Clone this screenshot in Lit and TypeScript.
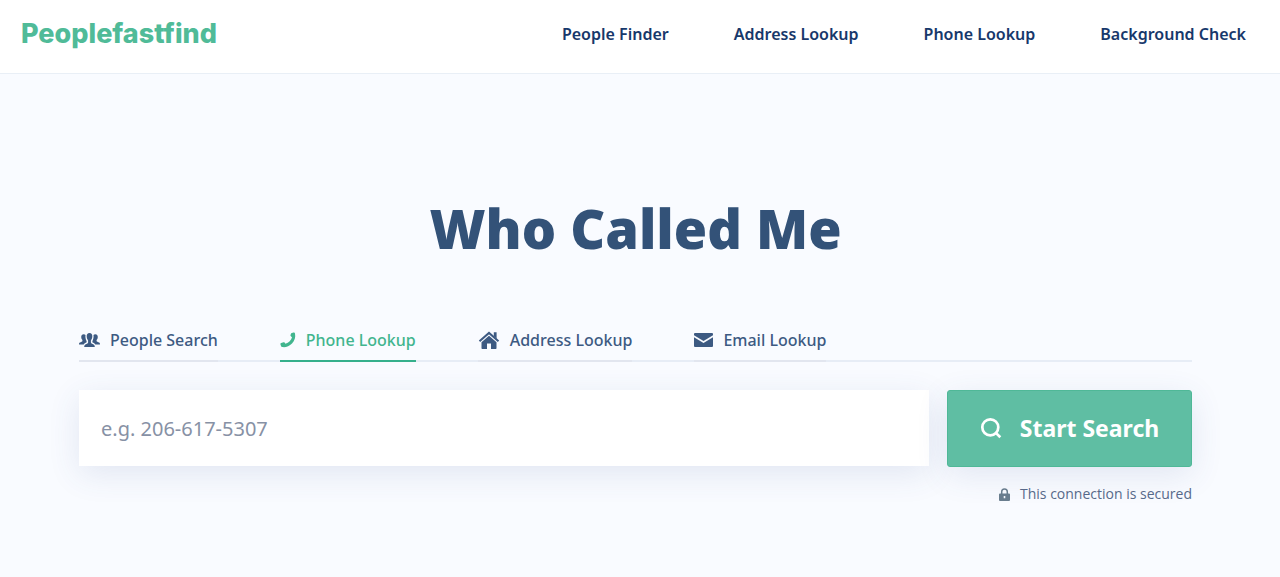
import { LitElement, html, css, svg } from "lit";
import { customElement, state } from "lit/decorators.js";
import { classMap } from "lit/directives/class-map.js";

const peopleIcon = svg`<svg width="21" height="14" viewBox="0 0 21 14" fill="currentColor" aria-hidden="true">
  <path d="M10.500 0C12.400 0 13.400 1.400 13.300 3.600C13.200 5.200 12.700 6.500 11.900 7.400V9.600C11.900 10.600 14 11 15 11.800C15.600 12.300 15.800 13 15.800 14H5.200C5.200 13 5.400 12.300 6 11.800C7 11 9.100 10.600 9.100 9.600V7.400C8.300 6.500 7.800 5.200 7.700 3.600C7.600 1.400 8.600 0 10.500 0Z"/>
  <path d="M4.700 1.200C5.500 1.200 6.100 1.500 6.500 2.100C6.200 4.300 6.700 6.600 7.600 8.200V9.300C6.600 9.900 5.400 10.300 4.700 11.400H0C0 10.300.2 9.900.9 9.500C1.900 8.900 3.400 8.900 3.400 8V7C2.600 6.300 2.200 5.300 2.200 4.100C2.200 2.300 3.100 1.200 4.700 1.200Z"/>
  <path d="M16.300 1.200C15.500 1.200 14.900 1.500 14.500 2.100C14.800 4.300 14.300 6.600 13.400 8.200V9.300C14.400 9.900 15.600 10.300 16.300 11.400H21C21 10.300 20.800 9.900 20.100 9.500C19.100 8.900 17.600 8.900 17.600 8V7C18.400 6.300 18.800 5.300 18.800 4.100C18.800 2.300 17.900 1.200 16.300 1.200Z"/>
</svg>`;

const phoneIcon = svg`<svg width="16" height="16" viewBox="0 0 16 16" fill="currentColor" aria-hidden="true">
  <path d="M11.200 1.300L13.400.5C14.400.2 14.800.6 15 1.400C15.800 5 14.700 8.600 12 11.400C9.200 14.300 5.600 15.600 2.200 15C1.500 14.900 1.200 14.600 1 14L.5 12.500C.2 11.700.5 11.200 1.200 11L3.500 10.300C4.200 10.100 4.700 10.300 5 10.900L5.400 11.800C7 11.400 8.500 10.500 9.700 9.300C10.900 8 11.700 6.600 12 5.200L11.100 4.500C10.500 4.100 10.300 3.600 10.500 3Z"/>
</svg>`;

const homeIcon = svg`<svg width="22" height="18" viewBox="0 0 22 18" fill="currentColor" aria-hidden="true">
  <path d="M11 4.700L18.500 11.200V17.300Q18.500 18 17.800 18H13V12.400H9V18H4.200Q3.500 18 3.500 17.300V11.200Z"/>
  <path d="M1.500 10.200L11 1.900L20.500 10.200" fill="none" stroke="currentColor" stroke-width="2"/>
  <path d="M15.800 1.200H18.600V7.700L15.800 5.300Z"/>
</svg>`;

const mailIcon = svg`<svg width="19" height="14" viewBox="0 0 19 14" fill="currentColor" aria-hidden="true">
  <path d="M1 0H18Q19 0 19 1V2.300L9.500 8L0 2.300V1Q0 0 1 0Z"/>
  <path d="M0 4.200L9.500 9.900L19 4.200V13Q19 14 18 14H1Q0 14 0 13Z"/>
</svg>`;

const searchIcon = svg`<svg width="22" height="22" viewBox="0 0 22 22" fill="none" stroke="currentColor" stroke-width="2.700" aria-hidden="true">
  <circle cx="10.300" cy="10.300" r="8"/>
  <path d="M15.600 15.600L20.300 20.300"/>
</svg>`;

const lockIcon = svg`<svg width="11" height="13" viewBox="0 0 11 13" aria-hidden="true">
  <path d="M2.700 6V3.800C2.700 2 3.800.9 5.500.9S8.300 2 8.300 3.800V6" fill="none" stroke="currentColor" stroke-width="1.500"/>
  <path fill="currentColor" fill-rule="evenodd" d="M1 5.400H10Q11 5.400 11 6.400V12Q11 13 10 13H1Q0 13 0 12V6.400Q0 5.400 1 5.400ZM4.700 7.900V10.300H6.300V7.900Z"/>
</svg>`;

const links = ["People Finder", "Address Lookup", "Phone Lookup", "Background Check"];

const tabs = [
  { label: "People Search", icon: peopleIcon },
  { label: "Phone Lookup", icon: phoneIcon },
  { label: "Address Lookup", icon: homeIcon },
  { label: "Email Lookup", icon: mailIcon },
];

@customElement("app-root")
export class AppRoot extends LitElement {
  @state() private active = 1;

  static styles = css`
    :host {
      display: flex;
      flex-direction: column;
      min-height: 100vh;
      background: #f9fbff;
      font-family: "Noto Sans", "Open Sans", sans-serif;
      color: #2e4c74;
    }
    * {
      box-sizing: border-box;
    }
    svg {
      display: block;
      flex: none;
    }
    .header {
      display: flex;
      align-items: center;
      justify-content: space-between;
      padding: 12px 34px 17px 21px;
      background: #fff;
      border-bottom: 1px solid #e9eff6;
    }
    .logo {
      font: 800 27px/44px Inter, "Open Sans", sans-serif;
      color: #50bb98;
      text-decoration: none;
    }
    .nav {
      display: flex;
      gap: 65px;
    }
    .nav-link {
      font-size: 16px;
      line-height: 24px;
      font-weight: 600;
      color: #17386b;
      text-decoration: none;
    }
    .hero {
      padding: 116px 88px 72px 79px;
    }
    .title {
      margin: 0;
      font: 800 54px/76px "Open Sans", sans-serif;
      text-align: center;
      color: #335278;
    }
    .tabs {
      display: flex;
      gap: 62px;
      margin-top: 59px;
      box-shadow: inset 0 -2px #e7edf6;
    }
    .tab {
      display: flex;
      align-items: center;
      gap: 10px;
      height: 37px;
      padding: 0 0 6px;
      border: 0;
      border-bottom: 2px solid #e2e6ef;
      background: none;
      font: 500 16px/24px "Noto Sans", "Open Sans", sans-serif;
      color: #3d5a82;
      cursor: pointer;
    }
    .tab.active {
      color: #41b58e;
      border-bottom-color: #36b08c;
    }
    .search {
      display: flex;
      gap: 18px;
      margin-top: 28px;
    }
    .field {
      flex: 1;
      min-width: 0;
      height: 76px;
      padding: 0 22px;
      border: 0;
      background: #fff;
      font: 400 20px/28px "Noto Sans", "Open Sans", sans-serif;
      color: #2e4c74;
      box-shadow: 0 8px 32px rgba(60, 80, 150, 0.12);
    }
    .field::placeholder {
      color: #8791a5;
      opacity: 1;
    }
    .submit {
      display: flex;
      align-items: center;
      justify-content: center;
      gap: 18px;
      width: 245px;
      height: 77px;
      padding: 0 0 1px;
      border: 1px solid #4fb897;
      border-radius: 3px;
      background: #5fbea3;
      font: 700 23px/32px "Noto Sans", "Open Sans", sans-serif;
      color: #fff;
      box-shadow: 0 8px 32px rgba(60, 80, 150, 0.12);
      cursor: pointer;
    }
    .secure {
      display: flex;
      align-items: center;
      justify-content: flex-end;
      gap: 10px;
      margin: 17px 0 0;
      font: 400 14px/20px "Open Sans", sans-serif;
      color: #56698a;
    }
    .secure svg {
      color: #697d8e;
    }
  `;

  render() {
    return html`
      <header class="header">
        <a class="logo" href="#">Peoplefastfind</a>
        <nav class="nav">
          ${links.map((label) => html`<a class="nav-link" href="#">${label}</a>`)}
        </nav>
      </header>
      <main class="hero">
        <h1 class="title">Who Called Me</h1>
        <div class="tabs" role="tablist">
          ${tabs.map(
            (tab, i) => html`<button
              type="button"
              role="tab"
              aria-selected=${i === this.active ? "true" : "false"}
              class=${classMap({ tab: true, active: i === this.active })}
              @click=${() => (this.active = i)}
            >${tab.icon}<span>${tab.label}</span></button>`
          )}
        </div>
        <form class="search" @submit=${(e: Event) => e.preventDefault()}>
          <input class="field" type="tel" aria-label="Phone number" placeholder="e.g. 206-617-5307" />
          <button class="submit" type="submit">${searchIcon}<span>Start Search</span></button>
        </form>
        <p class="secure">${lockIcon}<span>This connection is secured</span></p>
      </main>
    `;
  }
}
